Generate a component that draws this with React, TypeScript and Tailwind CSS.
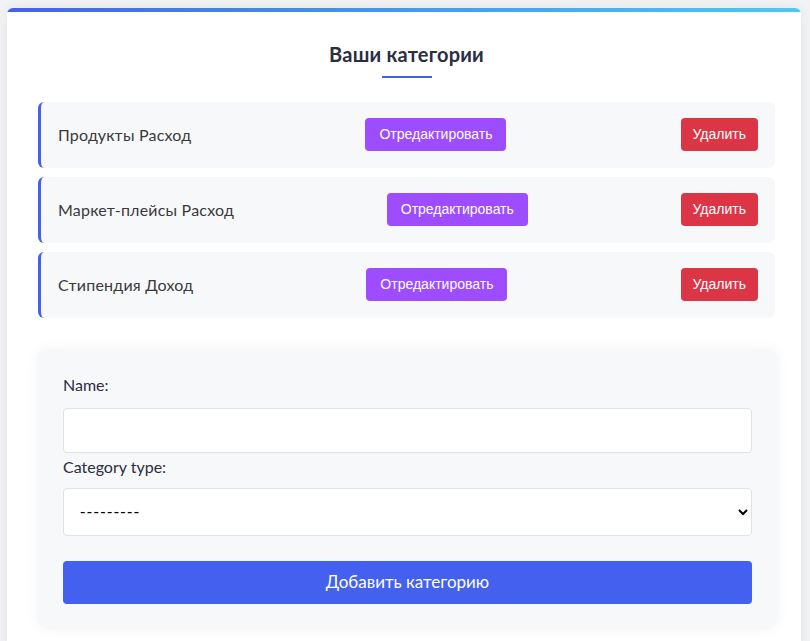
import React from "react";

const categories = [
  { name: "Продукты Расход" },
  { name: "Маркет-плейсы Расход" },
  { name: "Стипендия Доход" },
];

const textFont = { fontFamily: "Lato, 'Noto Sans', sans-serif" };
const btnFont = { fontFamily: "'Liberation Sans', Arial, sans-serif" };

export default function App() {
  return (
    <div className="min-h-screen bg-[#f1f2f4] pl-[7px] pt-[8px]">
      {/* Main card */}
      <div className="w-[794px] overflow-hidden rounded-t-[6px] bg-white shadow-[0_0_12px_rgba(0,0,0,0.06)]">
        <div className="h-[4px] bg-gradient-to-r from-[#4361ee] to-[#4cc9f0]" />

        <div className="pl-[31px] pr-[26px] pt-[29px] pb-[20px]">
          {/* Title */}
          <div className="flex flex-col items-center">
            <h2
              className="text-[20px] font-bold leading-[26px] tracking-[0.2px] text-[#2b2d42]"
              style={textFont}
            >
              Ваши категории
            </h2>
            <div className="mt-[9px] h-[2px] w-[50px] bg-[#4361ee]" />
          </div>

          {/* Category list */}
          <div className="mt-[24px] flex flex-col gap-[9.5px]">
            {categories.map((c) => (
              <div
                key={c.name}
                className="flex h-[65.5px] items-center justify-between rounded-[6px] border-l-[3px] border-[#4361ee] bg-[#f7f8fa] pl-[17px] pr-[17px]"
              >
                <span
                  className="text-[16px] tracking-[0.2px] text-[#3a3a3a]"
                  style={textFont}
                >
                  {c.name}
                </span>
                <button
                  className="h-[33px] rounded-[4px] bg-[#9d4dff] px-[14px] text-[14px] text-white"
                  style={btnFont}
                >
                  Отредактировать
                </button>
                <button
                  className="h-[33px] rounded-[4px] bg-[#dc3545] px-[12px] text-[14px] text-white"
                  style={btnFont}
                >
                  Удалить
                </button>
              </div>
            ))}
          </div>

          {/* Add form */}
          <div className="mt-[31px] mr-[-2px] rounded-[10px] bg-[#f7f8fa] px-[25px] pt-[24px] pb-[25px] shadow-[0_0_14px_rgba(0,0,0,0.05)]">
            <label
              className="block text-[16px] leading-[24px] text-[#2b2d42]"
              style={textFont}
            >
              Name:
            </label>
            <input
              type="text"
              className="mt-[11px] block h-[45px] w-full rounded-[4px] border border-[#dee2e6] bg-white px-[12px]"
            />
            <label
              className="mt-[2px] block text-[16px] leading-[24px] text-[#2b2d42]"
              style={textFont}
            >
              Category type:
            </label>
            <select
              className="mt-[9px] block h-[48px] w-full rounded-[4px] border border-[#dee2e6] bg-white px-[12px] text-[16px] tracking-[1.4px] text-black"
              style={btnFont}
              defaultValue=""
            >
              <option value="">---------</option>
              <option value="income">Доход</option>
              <option value="expense">Расход</option>
            </select>
            <button
              className="mt-[25px] block h-[43px] w-full rounded-[4px] bg-[#4361ee] text-[17px] text-white"
              style={textFont}
            >
              Добавить категорию
            </button>
          </div>
        </div>
      </div>
    </div>
  );
}
